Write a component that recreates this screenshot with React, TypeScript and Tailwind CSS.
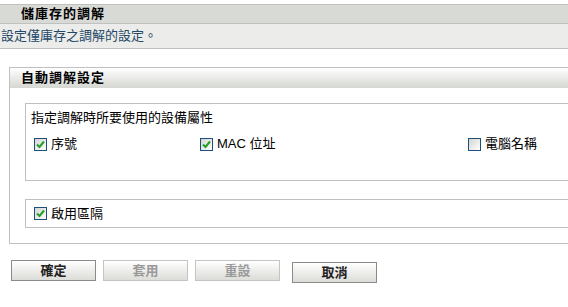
import React from 'react'

const font = { fontFamily: '"Liberation Sans", "Noto Sans CJK TC", sans-serif' }

const CheckBox = ({ checked }: { checked: boolean }) => (
  <span className="w-[13px] h-[13px] border border-[#1d4f7c] bg-linear-to-br from-[#d4d4d0] to-white flex items-center justify-center shrink-0">
    {checked && (
      <svg width="11" height="11" viewBox="0 0 11 11">
        <path d="M2 5.5 L4.5 8 L9 2.5" fill="none" stroke="#24a024" strokeWidth="2" />
      </svg>
    )}
  </span>
)

const Option = ({ label, checked }: { label: string; checked: boolean }) => (
  <label className="flex items-center gap-[4px] h-[16px] text-[13px] text-black">
    <CheckBox checked={checked} />
    <span>{label}</span>
  </label>
)

const Button = ({ label, disabled }: { label: string; disabled?: boolean }) => (
  <button
    className={
      disabled
        ? 'w-[85px] h-[21px] border border-[#c4c4c0] bg-linear-to-b from-white to-[#dcdcd8] text-[13px] font-bold text-[#9a9a9a] leading-none'
        : 'w-[85px] h-[21px] border border-[#8a8a88] bg-linear-to-b from-white to-[#dcdcd8] text-[13px] font-bold text-[#222] leading-none'
    }
  >
    {label}
  </button>
)

export default function App() {
  return (
    <div className="w-[568px] h-[307px] overflow-hidden bg-white pt-[4px]" style={font}>
      {/* Inventory reconciliation */}
      <div className="border-t border-b border-[#c0c0c0]">
        <div className="h-[19px] bg-[#d8dad5] border-b border-[#c0c0c0] pl-[21px] flex items-center text-[13px] font-bold text-black tracking-[1px]">
          儲庫存的調解
        </div>
        <div className="h-[24px] bg-[#ececea] pl-[1px] flex items-center text-[13px] text-[#244866]">
          設定僅庫存之調解的設定。
        </div>
      </div>

      {/* Auto reconciliation settings */}
      <div className="mt-[18px] ml-[9px] border-l border-t border-b border-[#c0c0c0]">
        <div className="h-[20px] bg-linear-to-b from-white to-[#d5d7d2] pl-[11px] flex items-center text-[13px] font-bold text-black tracking-[1px]">
          自動調解設定
        </div>
        <div className="pt-[15px] pb-[15px] pl-[15px]">
          <div className="border-l border-t border-b border-[#c0c0c0] h-[78px] pl-[5px] pt-[5px]">
            <div className="h-[18px] flex items-center text-[13px] text-black">指定調解時所要使用的設備屬性</div>
            <div className="mt-[9px] pl-[3px] grid grid-cols-[166px_268px_auto]">
              <Option label="序號" checked />
              <Option label="MAC 位址" checked />
              <Option label="電腦名稱" checked={false} />
            </div>
          </div>
          <div className="mt-[18px] border-l border-t border-b border-[#c0c0c0] h-[29px] pl-[8px] flex items-center">
            <Option label="啟用區隔" checked />
          </div>
        </div>
      </div>

      {/* Actions */}
      <div className="mt-[16px] ml-[11px] flex gap-[7px]">
        <Button label="確定" />
        <Button label="套用" disabled />
        <Button label="重設" disabled />
        <div className="ml-[5px]">
          <Button label="取消" />
        </div>
      </div>
    </div>
  )
}
